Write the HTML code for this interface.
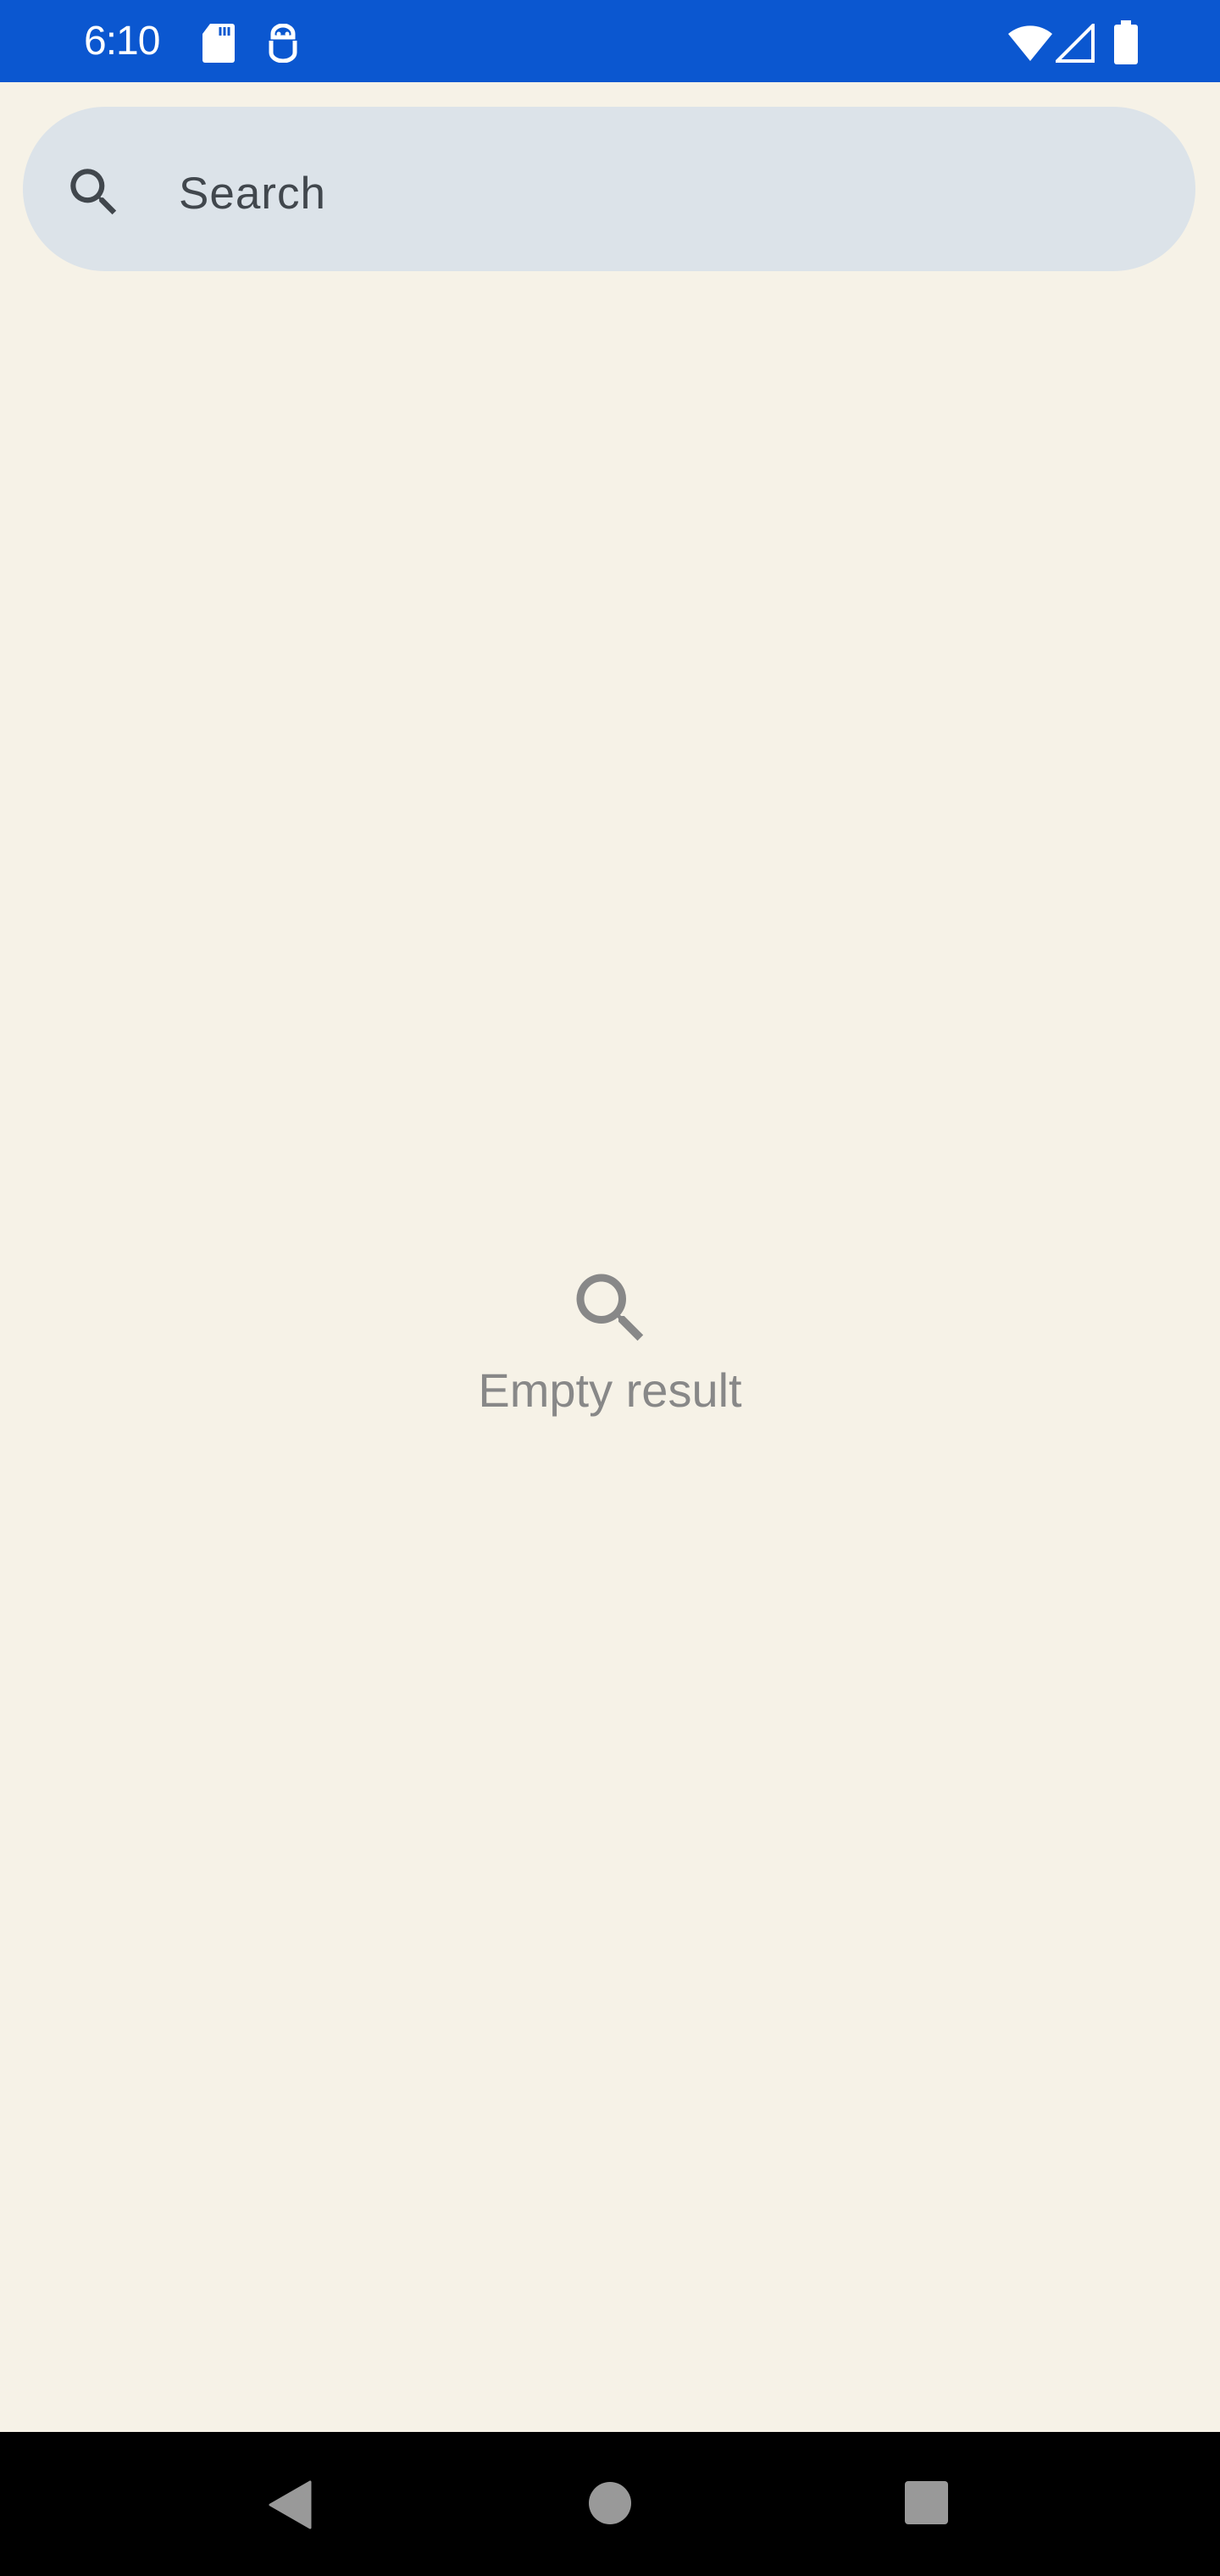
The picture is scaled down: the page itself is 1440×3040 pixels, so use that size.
<!DOCTYPE html>
<html><head><meta charset="utf-8"><style>
*{margin:0;padding:0;box-sizing:border-box}
body{width:1440px;height:3040px;background:#f6f2e7;position:relative;overflow:hidden;font-family:"Liberation Sans",sans-serif}
.sb{position:absolute;left:0;top:0;width:1440px;height:97px;background:#0b57d0}
.time{position:absolute;left:99px;top:21px;color:#fff;font-size:48px;letter-spacing:-1px}
.search{position:absolute;left:27px;top:126px;width:1384px;height:194px;background:#dce3e9;border-radius:97px}
.stext{position:absolute;left:211px;top:198px;font-size:53px;color:#41474d;letter-spacing:1px}
.empty{position:absolute;left:0;width:1440px;text-align:center;top:1608px;font-size:56px;color:#888}
.nav{position:absolute;left:0;top:2870px;width:1440px;height:170px;background:#000}
</style></head><body>
<div class="sb">
<div class="time">6:10</div>
<svg style="position:absolute;left:238px;top:28px" width="40" height="46" viewBox="0 0 40 46"><path d="M10 0H36a3 3 0 0 1 3 3V43a3 3 0 0 1-3 3H4a3 3 0 0 1-3-3V12Z" fill="#fff"/><path d="M22 4v10M27 4v10M32 4v10" stroke="#0b57d0" stroke-width="3"/></svg>
<svg style="position:absolute;left:316px;top:28px" width="36" height="46" viewBox="0 0 36 46"><path d="M6 12a12 10 0 0 1 24 0v4H6ZM4 20v14a14 10 0 0 0 28 0V20" fill="none" stroke="#fff" stroke-width="5"/><circle cx="13" cy="12" r="2.5" fill="#fff"/><circle cx="23" cy="12" r="2.5" fill="#fff"/></svg>
<svg style="position:absolute;left:1188px;top:28px" width="56" height="46" viewBox="0 0 56 46"><path d="M28 44L2 12A40 40 0 0 1 54 12Z" fill="#fff"/></svg>
<svg style="position:absolute;left:1246px;top:28px" width="46" height="46" viewBox="0 0 46 46"><path d="M44 2V44H2Z" fill="none" stroke="#fff" stroke-width="4"/></svg>
<svg style="position:absolute;left:1314px;top:24px" width="30" height="52" viewBox="0 0 30 52"><rect x="9" y="0" width="12" height="6" fill="#fff"/><rect x="1" y="5" width="28" height="47" rx="3" fill="#fff"/></svg>
</div>
<div class="search"></div>
<svg style="position:absolute;left:74px;top:190px" width="74" height="74" viewBox="0 0 24 24"><path fill="#41474d" d="M15.5 14h-.79l-.28-.27A6.47 6.47 0 0 0 16 9.5 6.5 6.5 0 1 0 9.5 16c1.61 0 3.09-.59 4.23-1.57l.27.28v.79l5 4.99L20.49 19l-4.99-5zm-6 0C7.01 14 5 11.99 5 9.5S7.01 5 9.5 5 14 7.01 14 9.5 11.99 14 9.5 14z"/></svg>
<div class="stext">Search</div>
<svg style="position:absolute;left:667px;top:1490px" width="108" height="108" viewBox="0 0 24 24"><path fill="#888" d="M15.5 14h-.79l-.28-.27A6.47 6.47 0 0 0 16 9.5 6.5 6.5 0 1 0 9.5 16c1.61 0 3.09-.59 4.23-1.57l.27.28v.79l5 4.99L20.49 19l-4.99-5zm-6 0C7.01 14 5 11.99 5 9.5S7.01 5 9.5 5 14 7.01 14 9.5 11.99 14 9.5 14z"/></svg>
<div class="empty">Empty result</div>
<div class="nav">
<svg style="position:absolute;left:316px;top:57px" width="52" height="58" viewBox="0 0 52 58"><path d="M50 2V56L3 29Z" fill="#999" stroke="#999" stroke-width="3" stroke-linejoin="round"/></svg>
<div style="position:absolute;left:695px;top:59px;width:50px;height:50px;border-radius:50%;background:#999"></div>
<div style="position:absolute;left:1068px;top:58px;width:51px;height:51px;border-radius:4px;background:#999"></div>
</div>
</body></html>
